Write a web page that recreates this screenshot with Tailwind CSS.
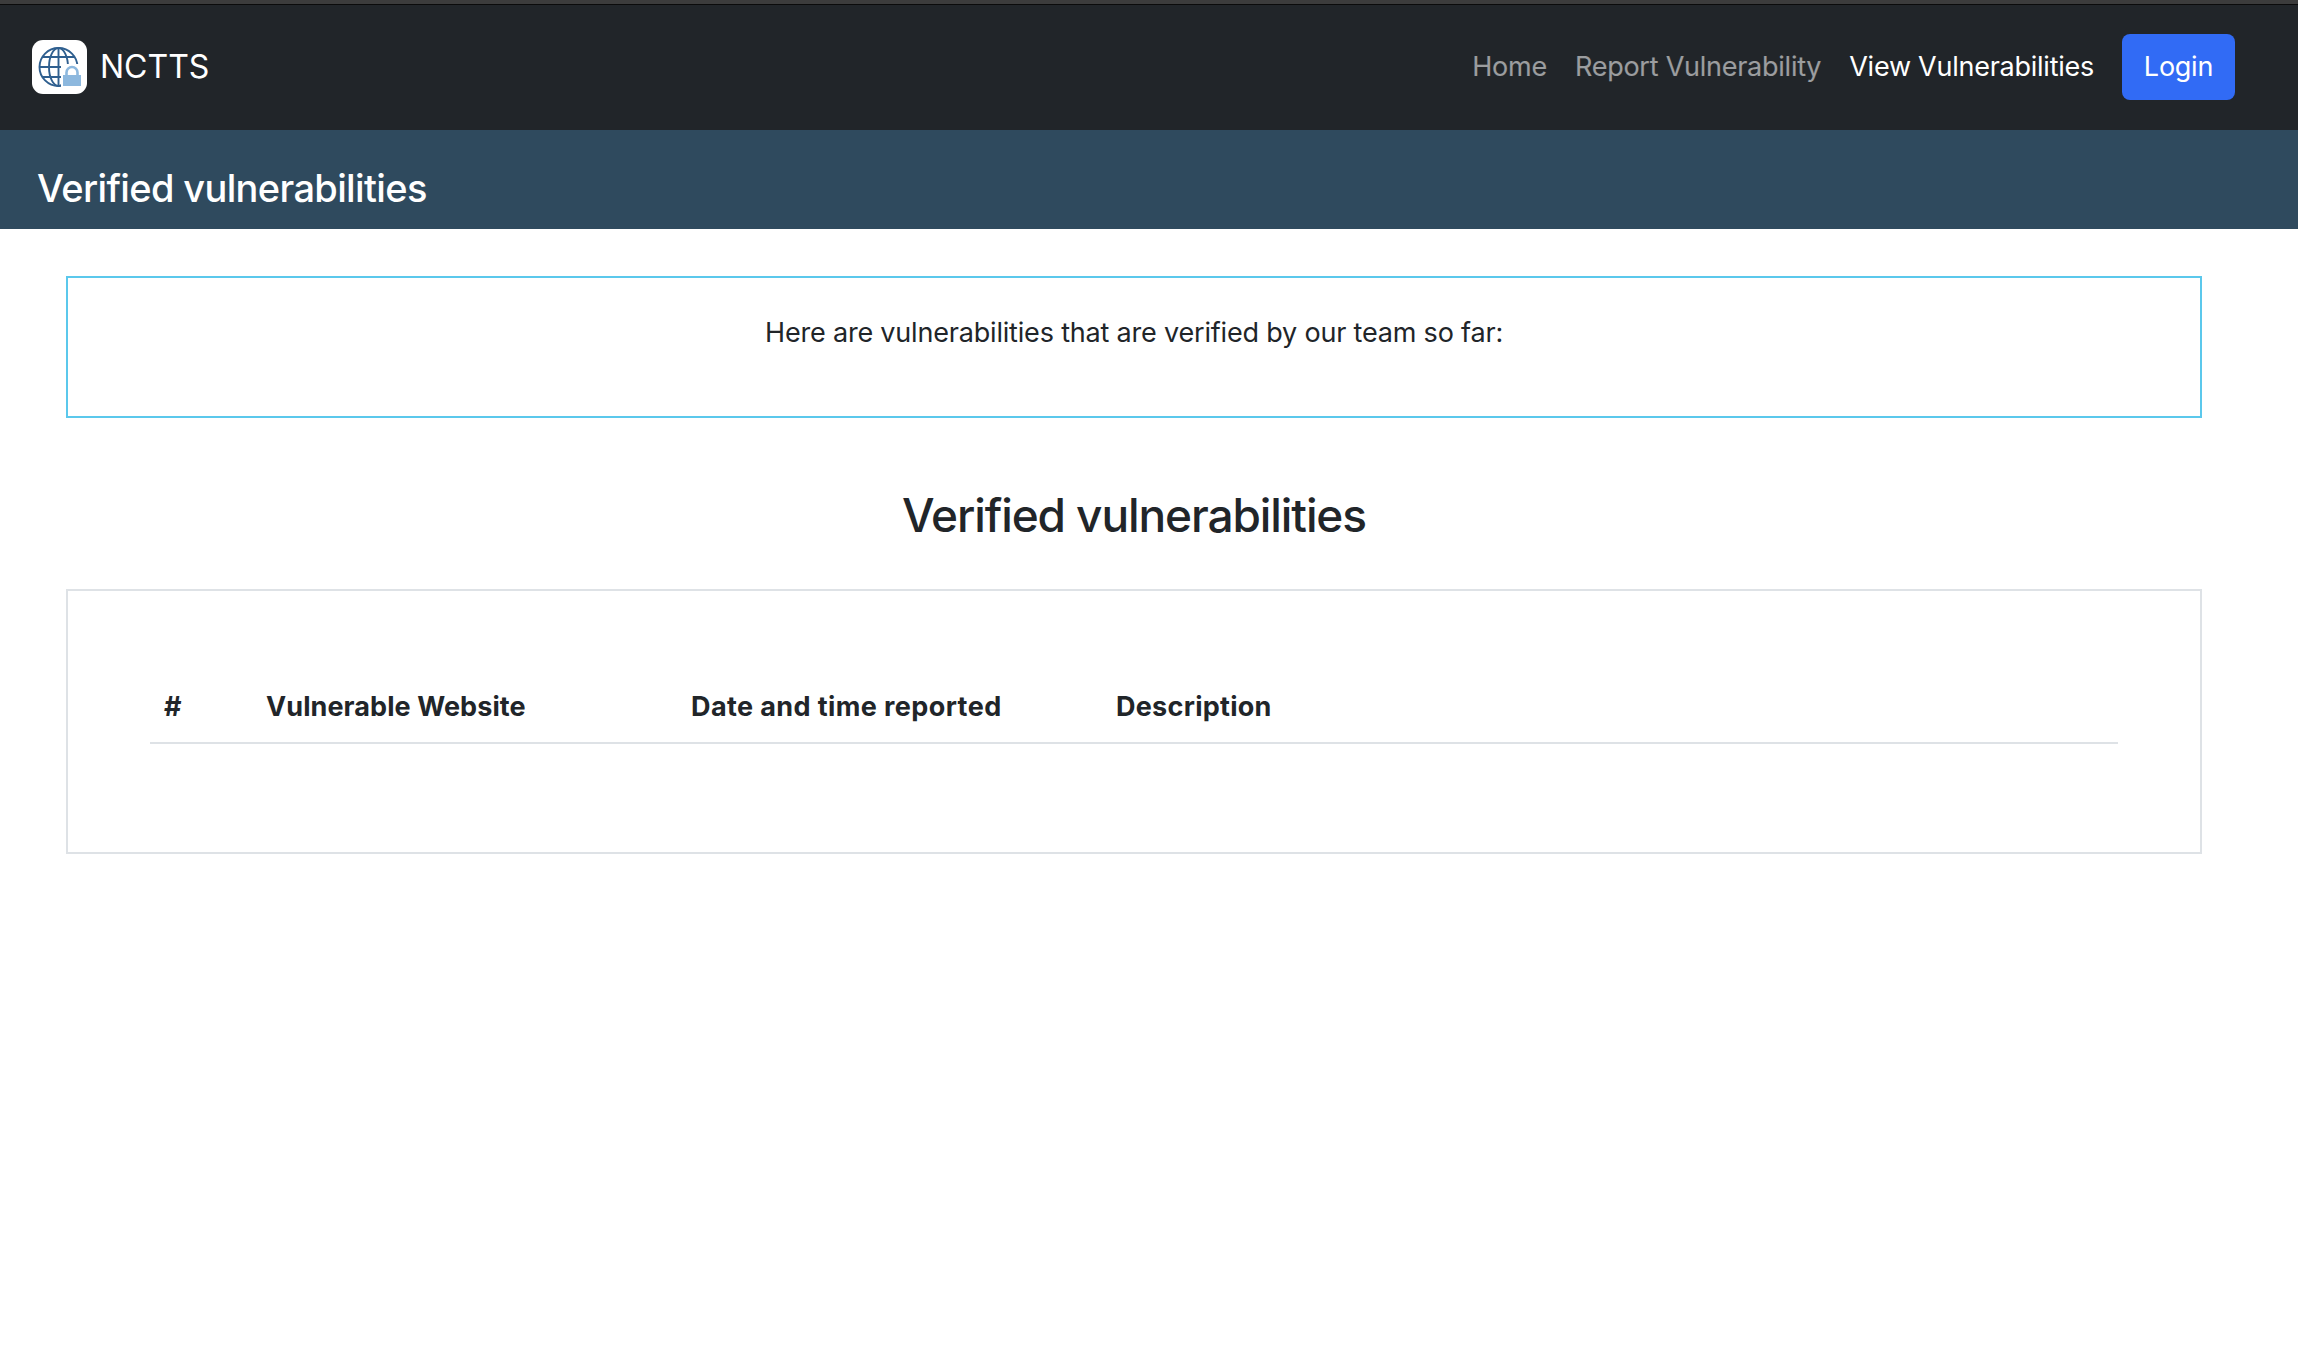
<!DOCTYPE html>
<html lang="en">
<head>
  <meta charset="UTF-8">
  <meta name="viewport" content="width=device-width, initial-scale=1.0">
  <title>NCTTS</title>
  <script src="https://cdn.jsdelivr.net/npm/@tailwindcss/browser@4"></script>
</head>
<body class="bg-white min-h-screen font-['Inter',sans-serif] text-[#212529]">
  <div class="h-[4px] bg-[#3c3c3c]"></div>
  <div class="h-[1px] bg-[#0b0b0b]"></div>

  <nav class="h-[125px] bg-[#212529] flex items-center pl-[32px] pr-[63px] pb-[1px]">
    <div class="w-[55px] h-[54px] bg-white rounded-[11px]">
      <svg width="55" height="54" viewBox="0 0 55 54" fill="none" stroke="#2f5f8f" stroke-width="1.9">
        <circle cx="26.5" cy="27" r="19" />
        <ellipse cx="26.5" cy="27" rx="9.5" ry="19" />
        <path d="M26.5 8v38M7.5 27h38M10 17h33M10 37h33" />
        <rect x="29" y="24" width="23" height="24" fill="white" stroke="none" />
        <path d="M34.5 36v-3.5a5.5 5.5 0 0 1 11 0v3.5" stroke="#8db8de" stroke-width="2.6" />
        <rect x="31" y="35" width="18" height="11" fill="#8db8de" stroke="none" />
      </svg>
    </div>
    <a class="ml-[13px] text-[32px] text-white">NCTTS</a>
    <div class="ml-auto flex items-center gap-[28px] text-[27px] tracking-[-0.25px]">
      <a class="text-white/55">Home</a>
      <a class="text-white/55">Report Vulnerability</a>
      <a class="text-white">View Vulnerabilities</a>
      <button class="w-[113px] h-[66px] bg-[#316bf5] text-white rounded-[8px]">Login</button>
    </div>
  </nav>

  <header class="h-[99px] bg-[#2f4a5e] flex items-center pl-[37px] pt-[18px]">
    <h1 class="text-[38px] font-medium tracking-[-0.64px] text-white">Verified vulnerabilities</h1>
  </header>

  <main class="px-[66px] pr-[96px] pt-[47px]">
    <div class="h-[142px] border-2 border-[#5bc8ec] pt-[35px] text-center text-[27px] tracking-[-0.19px]">
      Here are vulnerabilities that are verified by our team so far:
    </div>

    <h2 class="mt-[69px] text-center text-[46px] font-medium tracking-[-1.1px] leading-[56px]">Verified vulnerabilities</h2>

    <div class="mt-[46px] h-[265px] border-2 border-[#dee2e6] pt-[96px] pl-[82px] pr-[82px]">
      <table class="w-full table-fixed text-left text-[27px]">
        <thead>
          <tr class="border-b-2 border-[#dee2e6]">
            <th class="w-[102px] pl-[14px] pb-[14px] font-bold">#</th>
            <th class="w-[425px] pl-[14px] pb-[14px] font-bold tracking-[0.08px]">Vulnerable Website</th>
            <th class="w-[425px] pl-[14px] pb-[14px] font-bold tracking-[0.4px]">Date and time reported</th>
            <th class="pl-[14px] pb-[14px] font-bold tracking-[0.27px]">Description</th>
          </tr>
        </thead>
      </table>
    </div>
  </main>
</body>
</html>
